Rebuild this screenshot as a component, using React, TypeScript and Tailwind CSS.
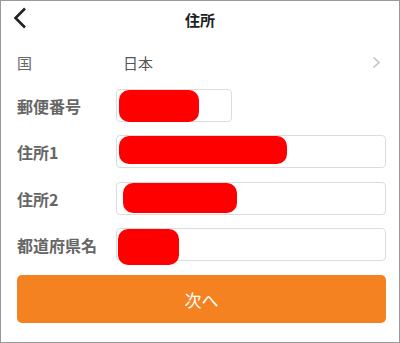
import React from "react";

const FONT = { fontFamily: '"Noto Sans CJK JP", "Noto Sans", sans-serif' };

function Field({
  label,
  width,
  mt,
  blob,
  extra,
}: {
  label: string;
  width: string;
  mt: string;
  blob: string;
  extra?: React.ReactNode;
}) {
  return (
    <div className={`flex items-center h-[33px] ${mt}`}>
      <div className="w-[99px] text-[16px] font-bold text-[#666] leading-none">{label}</div>
      <div className={`relative h-[33px] ${width} rounded-[4px] border border-[#dcdcdc] bg-white`}>
        {extra}
        <div className={`absolute bg-[#ff0000] ${blob}`} />
      </div>
    </div>
  );
}

export default function App() {
  return (
    <div style={FONT} className="w-[400px] h-[343px] border border-[#999] bg-white overflow-hidden flex flex-col">
      <div className="h-[37px] grid grid-cols-[1fr_auto_1fr] items-center">
        <div className="pl-[12px] pt-[0px]">
          <svg width="14" height="22" viewBox="0 0 14 22" className="-mt-[3px]">
            <path d="M12 1.5 L2.5 11 L12 20.5" fill="none" stroke="#222" strokeWidth="2.6" strokeLinecap="butt" strokeLinejoin="miter" />
          </svg>
        </div>
        <div className="text-[15px] font-bold text-[#222] leading-none">住所</div>
        <div />
      </div>
      <div className="h-[48px] flex items-center pl-[16px] pr-[18px]">
        <div className="w-[106px] text-[15px] text-[#666] leading-none">国</div>
        <div className="flex-1 text-[15px] text-[#555] leading-none">日本</div>
        <svg width="9" height="13" viewBox="0 0 9 13">
          <path d="M1.5 1.5 L7 6.5 L1.5 11.5" fill="none" stroke="#c4c4c4" strokeWidth="1.6" />
        </svg>
      </div>
      <div className="pl-[16px] pr-[13px] flex flex-col">
        <Field label="郵便番号" width="w-[116px]" mt="mt-[3px]" blob="left-[2px] top-0 w-[80px] h-[32px] rounded-[10px]" />
        <Field label="住所1" width="flex-1" mt="mt-[13px]" blob="left-[2px] top-0 w-[168px] h-[28px] rounded-[10px]" />
        <Field
          label="住所2"
          width="flex-1"
          mt="mt-[14px]"
          blob="left-[6px] top-0 w-[114px] h-[30px] rounded-[10px]"
          extra={<div className="absolute left-[6px] top-[15px] w-[3px] h-[2px] bg-[#777]" />}
        />
        <Field label="都道府県名" width="flex-1" mt="mt-[13px]" blob="left-[1px] top-0 w-[61px] h-[36px] rounded-[10px]" />
        <button className="mt-[14px] h-[48px] w-full rounded-[5px] bg-[#f58220] text-white text-[17px] leading-none">
          次へ
        </button>
      </div>
    </div>
  );
}
